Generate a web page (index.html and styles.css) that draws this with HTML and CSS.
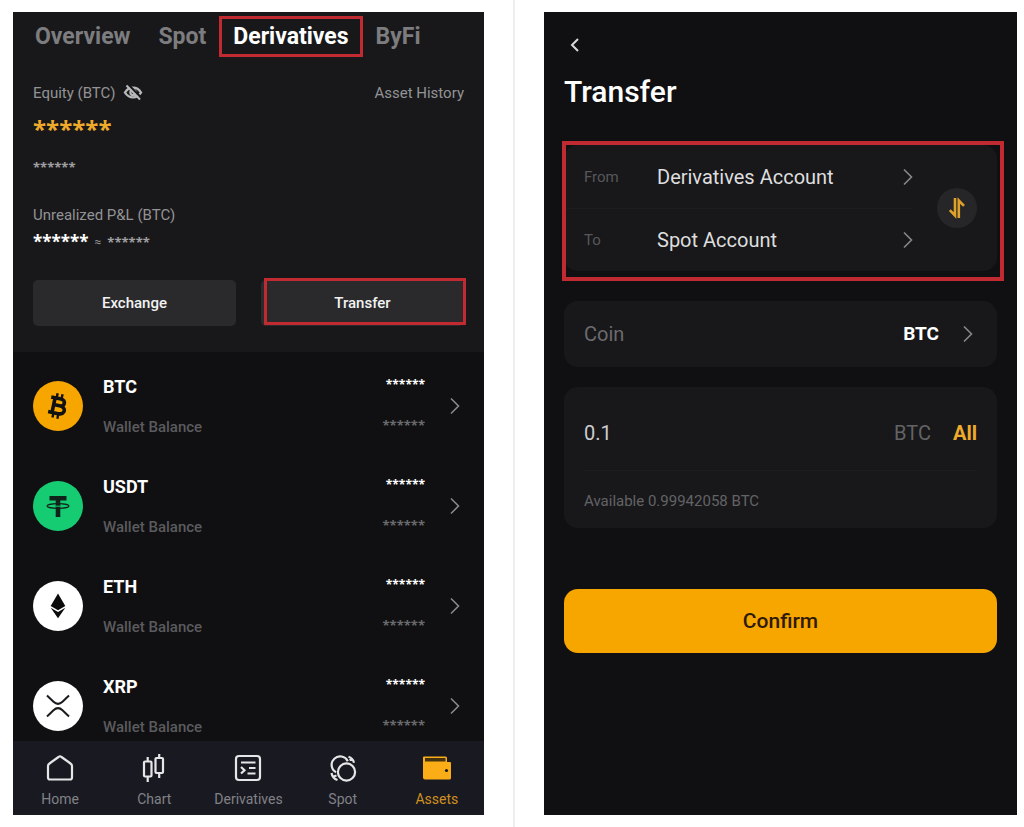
FILE: index.html
```html
<!DOCTYPE html>
<html lang="en">
<head>
<meta charset="utf-8">
<meta name="viewport" content="width=device-width, initial-scale=1">
<title>Transfer assets</title>
<link rel="stylesheet" href="styles.css">
</head>
<body>
<div class="board">
  <section class="pane pane-left">
    <div class="phone">
      <header class="summary">
        <nav class="tabs" aria-label="Accounts">
          <a class="tab" href="#">Overview</a>
          <a class="tab" href="#">Spot</a>
          <a class="tab tab-active" href="#">Derivatives</a>
          <a class="tab" href="#">ByFi</a>
        </nav>
        <div class="equity-row">
          <span>Equity (BTC)</span>
          <button class="icon-button" type="button" aria-label="Show balance">
            <svg width="20" height="18" viewBox="0 0 20 18" fill="none" stroke="#b9b9bb">
              <path d="M2 8.500C4 5.200 6.800 3.600 10 3.600S16 5.200 18 8.500C16 11.800 13.200 13.400 10 13.400S4 11.800 2 8.500Z" stroke-width="2.400"/>
              <circle cx="10" cy="8.500" r="2.600" stroke-width="2.200"/>
              <path d="M5 .500 18.500 14" stroke="#18181a" stroke-width="2.400"/>
              <path d="M3.500 1.500 17 15.500" stroke-width="2"/>
            </svg>
          </button>
          <a class="history" href="#">Asset History</a>
        </div>
        <div class="mask mask-total">******</div>
        <div class="mask mask-fiat">******</div>
        <div class="pnl-label">Unrealized P&amp;L (BTC)</div>
        <div class="pnl-value"><span class="mask mask-pnl">******</span><span class="approx">≈</span><span class="mask mask-fiat">******</span></div>
        <div class="actions">
          <button class="action" type="button">Exchange</button>
          <button class="action action-marked" type="button">Transfer</button>
        </div>
      </header>

      <ul class="assets">
        <li class="asset">
          <svg class="coin" viewBox="0 0 50 50"><circle cx="25" cy="25" r="25" fill="#f7a600"/>
            <g fill="none" stroke="#111" stroke-width="3.600" transform="rotate(12 25 25)">
              <path d="M16.500 17.500h10c5.500 0 5.500 7 0 7H20.500M26.500 24.500c7.500 0 7.500 8 0 8H16.500M20.500 17.500v15"/>
              <path d="M22 12.500v4M27 12.500v4M22 33.500v4M27 33.500v4" stroke-width="2.400"/>
            </g></svg>
          <div class="asset-name"><strong>BTC</strong><span>Wallet Balance</span></div>
          <div class="asset-value"><span class="mask mask-coin">******</span><span class="mask mask-sub">******</span></div>
          <svg class="chevron" viewBox="0 0 10 18"><path d="M1 1.500 8.500 9 1 16.500"/></svg>
        </li>
        <li class="asset">
          <svg class="coin" viewBox="0 0 50 50"><circle cx="25" cy="25" r="25" fill="#16cc73"/>
            <path d="M16.500 15h17v4.500h-6.200V36h-4.600V19.500h-6.200Z" fill="#10231a"/>
            <ellipse cx="25" cy="25" rx="11" ry="2.400" fill="none" stroke="#10231a" stroke-width="1.200"/>
            <path d="M22.700 25.200h4.600" stroke="#16cc73" stroke-width="1"/></svg>
          <div class="asset-name"><strong>USDT</strong><span>Wallet Balance</span></div>
          <div class="asset-value"><span class="mask mask-coin">******</span><span class="mask mask-sub">******</span></div>
          <svg class="chevron" viewBox="0 0 10 18"><path d="M1 1.500 8.500 9 1 16.500"/></svg>
        </li>
        <li class="asset">
          <svg class="coin" viewBox="0 0 50 50"><circle cx="25" cy="25" r="25" fill="#fff"/>
            <path d="M25 12.500 32.300 25 25 29.200 17.700 25Z" fill="#0b0b0c"/>
            <path d="M17.700 26.700 25 31 32.300 26.700 25 37.300Z" fill="#0b0b0c"/></svg>
          <div class="asset-name"><strong>ETH</strong><span>Wallet Balance</span></div>
          <div class="asset-value"><span class="mask mask-coin">******</span><span class="mask mask-sub">******</span></div>
          <svg class="chevron" viewBox="0 0 10 18"><path d="M1 1.500 8.500 9 1 16.500"/></svg>
        </li>
        <li class="asset">
          <svg class="coin" viewBox="0 0 50 50"><circle cx="25" cy="25" r="25" fill="#fff"/>
            <path d="M14 14.500 20.500 20.800Q25 25 29.500 20.800L36 14.500M14 35.500 20.500 29.200Q25 25 29.500 29.200L36 35.500" fill="none" stroke="#1b1b1d" stroke-width="2"/></svg>
          <div class="asset-name"><strong>XRP</strong><span>Wallet Balance</span></div>
          <div class="asset-value"><span class="mask mask-coin">******</span><span class="mask mask-sub">******</span></div>
          <svg class="chevron" viewBox="0 0 10 18"><path d="M1 1.500 8.500 9 1 16.500"/></svg>
        </li>
      </ul>

      <nav class="bottom-nav" aria-label="Main">
        <a class="nav-item" href="#">
          <svg viewBox="0 0 30 30"><path d="M4.500 10.500Q3 11.500 3 13V24.500Q3 26.500 5 26.500H25Q27 26.500 27 24.500V13Q27 11.500 25.500 10.500L16.500 4Q15 2.800 13.500 4Z"/></svg>
          <span>Home</span></a>
        <a class="nav-item" href="#">
          <svg viewBox="0 0 30 30"><rect x="5" y="8.500" width="7.500" height="15" rx="1"/><path d="M8.700 4v4.500M8.700 23.500V29"/><rect x="16.500" y="5" width="7.500" height="15" rx="1"/><path d="M20.200 1v4M20.200 20v5"/></svg>
          <span>Chart</span></a>
        <a class="nav-item" href="#">
          <svg viewBox="0 0 30 30"><rect x="3" y="3" width="24" height="24" rx="3"/><path d="M8 9.500H22.500M8 14 11.500 17.200 8 20.500M16 15H22.500M14.500 20.500H22.500"/></svg>
          <span>Derivatives</span></a>
        <a class="nav-item" href="#">
          <svg viewBox="0 0 30 30"><circle cx="18.500" cy="19" r="8.600"/><path d="M8 19.300A8.500 8.500 0 1 1 19.800 8.200"/><path d="M20.500 3.800Q24.800 5 26 9.800M24 5.800 21.500 7M3.500 20Q4.500 25.500 9.500 27M5.500 23.500 8.500 22.500"/></svg>
          <span>Spot</span></a>
        <a class="nav-item nav-active" href="#">
          <svg class="wallet" viewBox="0 0 30 30"><path d="M2 3.500H23.500Q25 3.500 25 5V9H28Q29 9 29 10V25Q29 26.500 27.500 26.500H3Q1 26.500 1 24.500V4.500Q1 3.500 2 3.500Z" fill="#fbad18"/><path d="M3 5H23.500V8.500H3Z" fill="#45320f"/><circle cx="24.500" cy="17.500" r="1.600" fill="#181a20"/></svg>
          <span>Assets</span></a>
      </nav>
    </div>
  </section>

  <section class="pane pane-right">
    <form class="phone transfer">
      <button class="icon-button back" type="button" aria-label="Back">
        <svg width="10" height="14" viewBox="0 0 10 14" fill="none" stroke="#d8d8da" stroke-width="2"><path d="M8 1 2 7l6 6"/></svg>
      </button>
      <h1 class="title">Transfer</h1>

      <div class="card accounts">
        <div class="account-rows">
          <button class="account" type="button"><span class="account-label">From</span><span class="account-name">Derivatives Account</span>
            <svg class="chevron" viewBox="0 0 10 18"><path d="M1 1.500 8.500 9 1 16.500"/></svg></button>
          <button class="account" type="button"><span class="account-label">To</span><span class="account-name">Spot Account</span>
            <svg class="chevron" viewBox="0 0 10 18"><path d="M1 1.500 8.500 9 1 16.500"/></svg></button>
        </div>
        <button class="swap" type="button" aria-label="Swap accounts">
          <svg width="18" height="22" viewBox="0 0 18 22" fill="none" stroke="#e0a02c" stroke-width="2.600"><path d="M7 1V18.500L1.800 13.200M10.800 21V3.500L16 8.800"/></svg>
        </button>
      </div>

      <button class="card coin-row" type="button">
        <span class="coin-label">Coin</span><strong>BTC</strong>
        <svg class="chevron" viewBox="0 0 10 18"><path d="M1 1.500 8.500 9 1 16.500"/></svg>
      </button>

      <div class="card amount">
        <div class="amount-row">
          <input class="amount-input" type="text" value="0.1" aria-label="Amount">
          <span class="unit">BTC</span>
          <button class="all" type="button">All</button>
        </div>
        <p class="available">Available 0.99942058 BTC</p>
      </div>

      <button class="confirm" type="submit">Confirm</button>
    </form>
  </section>
</div>
</body>
</html>
```
FILE: styles.css
```css
* { box-sizing: border-box; }

body {
  margin: 0;
  background: #fff;
  color: #fff;
  font-family: Roboto, "Liberation Sans", sans-serif;
  font-size: 15px;
  line-height: 20px;
}

a { color: inherit; text-decoration: none; }

button, input {
  margin: 0;
  padding: 0;
  border: 0;
  background: none;
  color: inherit;
  font: inherit;
}

button { cursor: pointer; }

.board {
  display: grid;
  grid-template-columns: 515fr 509fr;
  min-height: 100vh;
}

.pane { display: flex; padding: 12px 7px 12px 29px; }
.pane-left { padding: 12px 29px 12px 13px; border-right: 2px solid #eee; }

.phone {
  flex: 1;
  min-width: 0;
  display: flex;
  flex-direction: column;
  background: #101012;
}

/* Derivatives account */

.summary {
  padding: 4px 20px 26px;
  background: #18181a;
  color: #939395;
}

.tabs { display: flex; align-items: center; font-size: 23px; font-weight: 700; color: #7d7d80; }
.tab { padding: 0 13px; line-height: 41px; }
.tab:first-child { padding: 0 15px 0 2px; }
.tab-active { padding: 0 11px; border: 3px solid #c02a30; line-height: 35px; color: #fff; }

.icon-button { display: flex; }

.equity-row { display: flex; align-items: center; gap: 8px; margin-top: 26px; }
.history { margin-left: auto; }

.mask { font-family: "Open Sans", "Noto Sans", sans-serif; font-weight: 700; }
.mask-total { margin: 12px 0 4px; font-size: 24px; line-height: 28px; color: #eeab2b; }
.mask-fiat { font-size: 13px; line-height: 40px; color: #a0a0a2; }
.pnl-label { margin-top: 18px; }
.pnl-value { display: flex; align-items: center; gap: 6px; height: 34px; }
.mask-pnl { font-size: 17px; color: #fff; }
.approx { font-size: 12px; }

.actions { display: grid; grid-template-columns: 1fr 1fr; gap: 25px; margin-top: 21px; }
.action {
  position: relative;
  height: 46px;
  border-radius: 5px;
  background: #2a2a2c;
  color: #f2f2f3;
  font-weight: 500;
}
.action-marked::after {
  content: "";
  position: absolute;
  inset: -2px -2px 1px 3px;
  border: 3px solid #c02a30;
}

.assets {
  flex: 1;
  display: flex;
  flex-direction: column;
  gap: 40px;
  margin: 0;
  padding: 24px 24px 5px 20px;
  list-style: none;
}
.asset { display: flex; align-items: center; height: 60px; }
.coin { width: 50px; height: 50px; }
.asset-name { display: flex; flex-direction: column; gap: 20px; margin: 2px 0 0 20px; color: #5b5b5e; font-weight: 500; }
.asset-name strong { color: #fff; font-size: 18px; font-weight: 700; }
.asset-value { display: flex; flex-direction: column; align-items: flex-end; gap: 20px; margin: 0 25px 3px auto; }
.mask-coin { font-size: 12px; color: #fff; }
.mask-sub { font-size: 13px; color: #6a6a6d; }

.chevron { width: 10px; height: 18px; fill: none; stroke: #88888b; stroke-width: 1.600; }

.bottom-nav {
  display: grid;
  grid-template-columns: repeat(5, 1fr);
  padding: 12px 0 6px;
  background: #191a21;
  color: #818187;
  font-size: 14px;
}
.nav-item { display: flex; flex-direction: column; align-items: center; gap: 6px; }
.nav-item svg { width: 30px; height: 30px; fill: none; stroke: #e6e6e8; stroke-width: 2.200; }
.nav-item .wallet { stroke: none; }
.nav-active { color: #cf9020; }

/* Transfer form */

.transfer { padding: 26px 20px; }
.back { align-self: flex-start; padding: 0 6px; }
.title { margin: 20px 0 0; font-size: 30px; line-height: 40px; font-weight: 500; }

.card { border-radius: 14px; background: #18181a; }

.accounts {
  position: relative;
  display: flex;
  align-items: center;
  gap: 24px;
  margin-top: 33px;
  padding-right: 20px;
}
.accounts::after {
  content: "";
  position: absolute;
  inset: -4px -7px -10px -2px;
  border: 4px solid #c02a30;
  pointer-events: none;
}
.account-rows { flex: 1; }
.account { display: flex; align-items: center; width: 100%; height: 63px; padding-left: 20px; text-align: left; }
.account + .account { border-top: 1px solid #1d1d1f; }
.account-label { width: 73px; color: #57575a; }
.account-name { flex: 1; font-size: 20px; color: #dededf; }
.swap {
  display: flex;
  align-items: center;
  justify-content: center;
  width: 40px;
  height: 40px;
  border-radius: 50%;
  background: #262628;
}

.coin-row { display: flex; align-items: center; height: 66px; margin-top: 30px; padding: 0 24px 0 20px; font-size: 20px; }
.coin-row strong { font-size: 19px; }
.coin-label { margin-right: auto; color: #6b6b6e; }
.coin-row .chevron { margin-left: 24px; }

.amount { margin-top: 20px; padding: 8px 20px 17px; }
.amount-row { display: flex; align-items: center; gap: 22px; height: 76px; border-bottom: 1px solid #1d1d1f; font-size: 20px; }
.amount-input { flex: 1; min-width: 0; color: #cdcdcf; }
.unit { color: #636366; }
.all { color: #eeab2b; font-weight: 700; }
.available { margin: 20px 0 0; color: #636366; }

.confirm {
  height: 64px;
  margin-top: 61px;
  border-radius: 14px;
  background: #f7a600;
  color: #2e1a08;
  font-size: 21px;
  font-weight: 500;
}
```
